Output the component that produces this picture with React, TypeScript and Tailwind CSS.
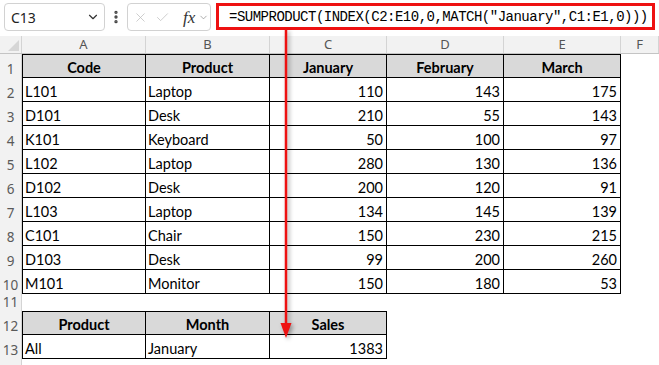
import { Check, ChevronDown, EllipsisVertical, X } from 'lucide-react';

type Line = [string, string, number, number, number];

const data: Line[] = [
    ['L101', 'Laptop', 110, 143, 175],
    ['D101', 'Desk', 210, 55, 143],
    ['K101', 'Keyboard', 50, 100, 97],
    ['L102', 'Laptop', 280, 130, 136],
    ['D102', 'Desk', 200, 120, 91],
    ['L103', 'Laptop', 134, 145, 139],
    ['C101', 'Chair', 150, 230, 215],
    ['D103', 'Desk', 99, 200, 260],
    ['M101', 'Monitor', 150, 180, 53],
];

const cellBase = 'flex items-end border-r border-b border-black pb-[2px] text-[14.5px] leading-none text-black';
const headCell = `${cellBase} justify-center bg-[#d9d9d9] border-t font-bold`;
const textCell = `${cellBase} pl-[2px]`;
const numCell = `${cellBase} justify-end pr-[3px]`;

function Row({ n, tall = true, children }: { n?: number; tall?: boolean; children?: React.ReactNode }) {
    return (
        <div
            className={`grid grid-cols-[22px_124px_124px_117px_117px_117px_1fr] ${tall ? 'h-[24px]' : 'h-[17px]'}`}
        >
            <div className="flex items-end justify-center border-r border-[#d4d4d4] bg-[#f2f2f2] pb-[2px] font-['Noto_Sans'] text-[13.5px] leading-none text-[#5a5a5a]">
                {n}
            </div>
            {children}
        </div>
    );
}

function Toolbar() {
    return (
        <div className="flex h-[36px] items-start pt-[3px] pl-[4px] pr-[4px] font-['Noto_Sans']">
            {/* Name box */}
            <div className="flex h-[28px] w-[101px] shrink-0 items-center justify-between rounded-[4px] border border-[#d2d2d2] pl-[6px] pr-[4px] text-[14px] text-[#222]">
                <span>C13</span>
                <ChevronDown size={14} strokeWidth={2} className="text-[#333]" />
            </div>
            <div className="flex h-[28px] w-[22px] shrink-0 items-center justify-center">
                <EllipsisVertical size={16} strokeWidth={3} className="text-[#444]" />
            </div>
            {/* Cancel / enter / insert function */}
            <div className="flex h-[28px] w-[84px] shrink-0 items-center rounded-[4px] border border-[#d2d2d2] pl-[5px]">
                <X size={15} strokeWidth={1.2} className="text-[#bdbdbd]" />
                <Check size={15} strokeWidth={1.2} className="ml-[7px] text-[#bdbdbd]" />
                <span className="ml-[13px] font-['Liberation_Serif'] text-[17px] italic leading-none text-[#333]">
                    fx
                </span>
                <ChevronDown size={11} strokeWidth={1.5} className="ml-[3px] text-[#888]" />
            </div>
            {/* Formula bar */}
            <div className="ml-[5px] flex h-[27px] min-w-0 flex-1 items-center overflow-hidden whitespace-nowrap border-[3px] border-[#ee1111] pl-[10px] font-['Liberation_Mono'] text-[14px] tracking-[-0.5px] leading-none text-black">
                =SUMPRODUCT(INDEX(C2:E10,0,MATCH("January",C1:E1,0)))
            </div>
        </div>
    );
}

function ColumnHeaders() {
    return (
        <div className="grid h-[18px] grid-cols-[22px_124px_124px_117px_117px_117px_1fr] border-b border-[#c4c4c4] bg-[#f2f2f2] font-['Noto_Sans'] text-[13px] leading-none text-[#555]">
            <div className="relative border-r border-[#d4d4d4]">
                <div className="absolute right-[2px] bottom-[2px] h-0 w-0 border-b-[11px] border-l-[11px] border-b-[#d6d6d6] border-l-transparent" />
            </div>
            {['A', 'B', 'C', 'D', 'E', 'F'].map((c) => (
                <div key={c} className="flex items-center justify-center border-r border-[#d4d4d4]">
                    {c}
                </div>
            ))}
        </div>
    );
}

export default function App() {
    return (
        <div className="relative h-[365px] w-[659px] overflow-hidden bg-white font-['Lato']">
            <Toolbar />
            <ColumnHeaders />

            {/* Source table */}
            <Row n={1}>
                <div className={`${headCell} border-l`}>Code</div>
                <div className={headCell}>Product</div>
                <div className={headCell}>January</div>
                <div className={headCell}>February</div>
                <div className={headCell}>March</div>
            </Row>
            {data.map(([code, product, jan, feb, mar], i) => (
                <Row key={code} n={i + 2}>
                    <div className={`${textCell} border-l`}>{code}</div>
                    <div className={textCell}>{product}</div>
                    <div className={numCell}>{jan}</div>
                    <div className={numCell}>{feb}</div>
                    <div className={numCell}>{mar}</div>
                </Row>
            ))}
            <Row n={11} tall={false} />

            {/* Result table */}
            <Row n={12}>
                <div className={`${headCell} border-l`}>Product</div>
                <div className={headCell}>Month</div>
                <div className={headCell}>Sales</div>
            </Row>
            <Row n={13}>
                <div className={`${textCell} border-l`}>All</div>
                <div className={textCell}>January</div>
                <div className={numCell}>1383</div>
            </Row>
            <Row />

            {/* Callout arrow from formula bar to result */}
            <svg
                className="absolute top-[29px] left-[280px] drop-shadow-[2px_2px_2px_rgba(0,0,0,0.35)]"
                width="14"
                height="312"
                viewBox="0 0 14 312"
            >
                <line x1="6" y1="0" x2="6" y2="296" stroke="#ee1111" strokeWidth="2.5" />
                <polygon points="0.5,294 11.5,294 6,309" fill="#ee1111" />
            </svg>
        </div>
    );
}
